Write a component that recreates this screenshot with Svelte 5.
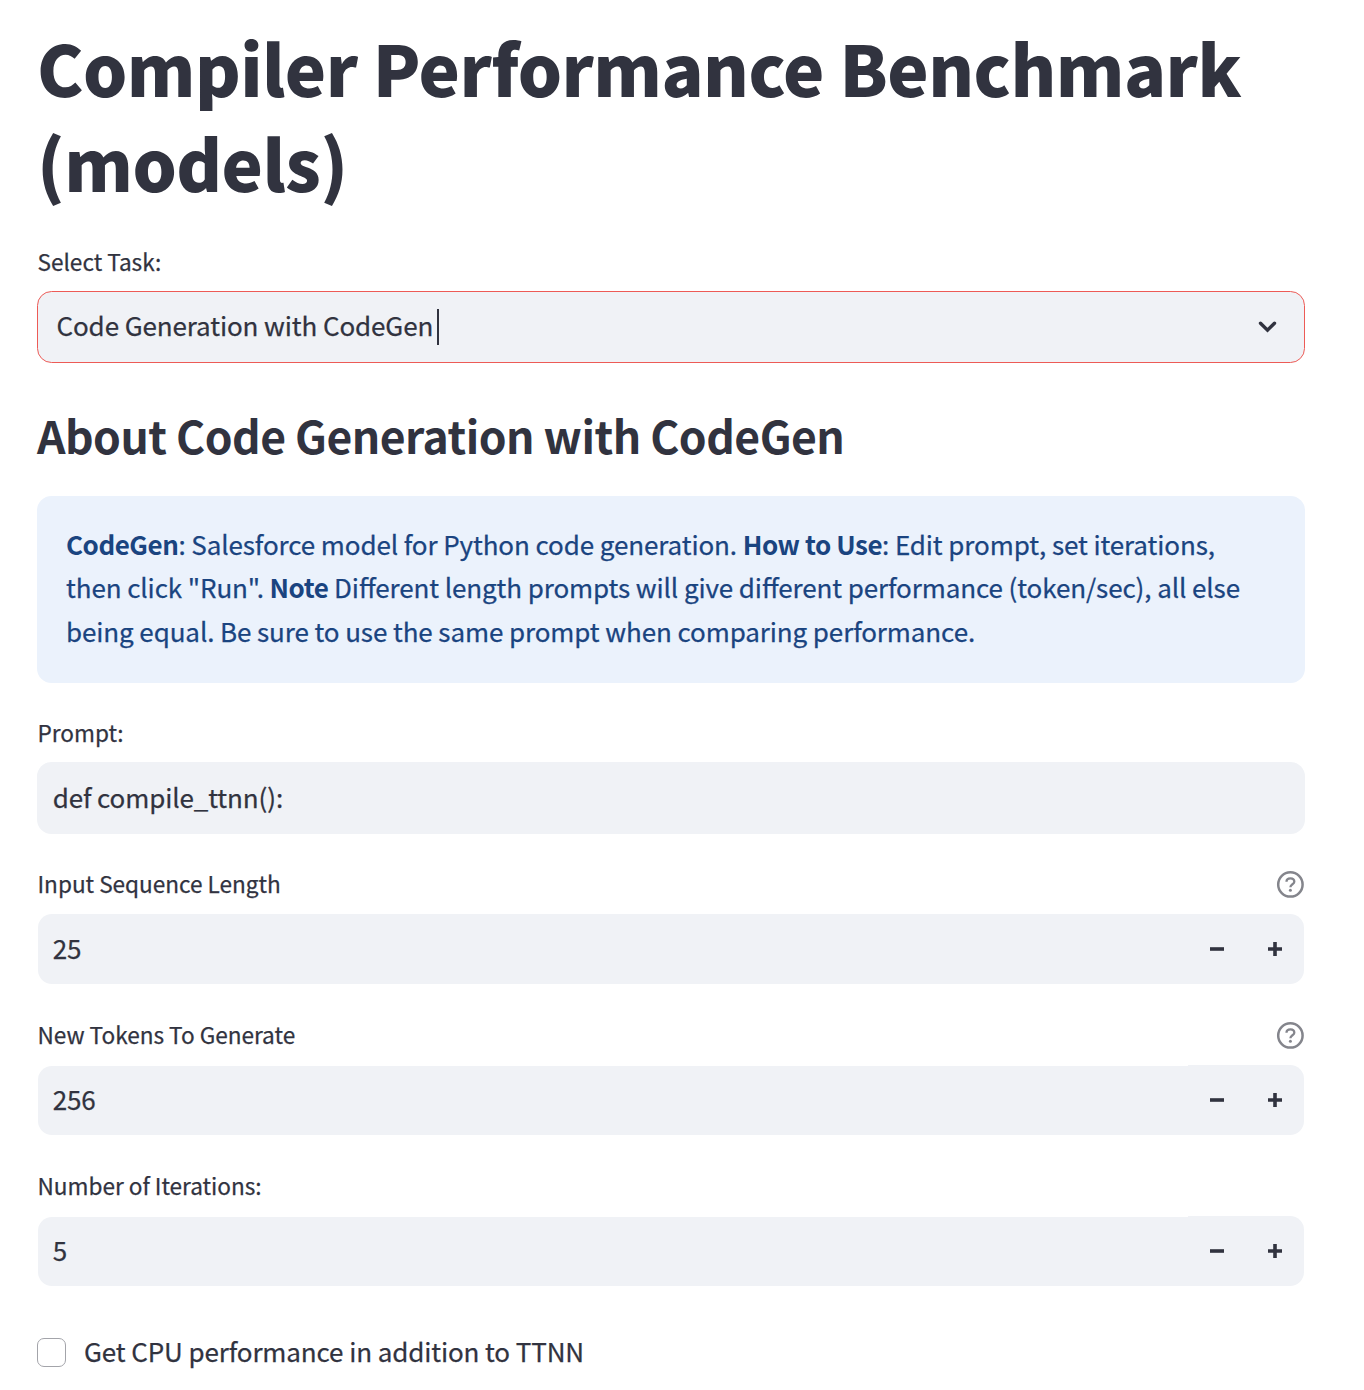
<script>
  const fields = [
    { id: 'seq', label: 'Input Sequence Length', value: '25', help: true },
    { id: 'tokens', label: 'New Tokens To Generate', value: '256', help: true, inset: true },
    { id: 'iters', label: 'Number of Iterations:', value: '5', help: false, inset: true },
  ];
</script>

<main>
  <h1>Compiler Performance Benchmark<br />(models)</h1>

  <div class="label first"><span>Select Task:</span></div>
  <div class="select">
    <span class="text">Code Generation with CodeGen</span><i class="caret"></i>
    <svg class="chevron" width="20" height="14" viewBox="0 0 20 14">
      <path d="M2.5 3.2 L9.5 10.2 L16.5 3.2" fill="none" stroke="#31333f" stroke-width="3.4" stroke-linecap="round" />
    </svg>
  </div>

  <h2>About Code Generation with CodeGen</h2>

  <div class="info">
    <p><b>CodeGen</b>: Salesforce model for Python code generation. <b>How to Use</b>: Edit prompt, set iterations,</p>
    <p>then click "Run". <b>Note</b> Different length prompts will give different performance (token/sec), all else</p>
    <p>being equal. Be sure to use the same prompt when comparing performance.</p>
  </div>

  <div class="label prompt"><span>Prompt:</span></div>
  <div class="input"><span class="text">def compile_ttnn():</span></div>

  {#each fields as f (f.id)}
    <div class="label"><span>{f.label}</span>
      {#if f.help}
        <svg width="28" height="28" viewBox="0 0 28 28" fill="none" stroke="#84858c">
          <circle cx="14.4" cy="14.4" r="12.2" stroke-width="2.5" />
          <path d="M10.5 11.8 C10.5 9.7 12.1 8.3 14.4 8.3 C16.7 8.3 18.3 9.7 18.3 11.7 C18.3 14.2 14.4 14.3 14.4 17.2" stroke-width="2.3" />
          <circle cx="14.4" cy="20.3" r="1.5" fill="#84858c" stroke="none" />
        </svg>
      {/if}
    </div>
    <div class="number">
      <span class="value" class:inset={f.inset}><span class="text">{f.value}</span></span>
      <span class="steps">
        <svg width="14" height="14" viewBox="0 0 14 14"><path d="M0 7H14" stroke="#31333f" stroke-width="3.6" /></svg>
        <svg width="14" height="14" viewBox="0 0 14 14"><path d="M0 7H14M7 0V14" stroke="#31333f" stroke-width="3.6" /></svg>
      </span>
    </div>
  {/each}

  <label class="check"><i class="box"></i><span class="text">Get CPU performance in addition to TTNN</span></label>
</main>

<style>
  :global(body) { background: #fff; }
  main {
    box-sizing: border-box;
    width: 1364px;
    height: 1390px;
    overflow: hidden;
    padding: 20px 59px 0 37px;
    font-family: "Noto Sans CJK JP", "Noto Sans", sans-serif;
    font-size: 26px;
    letter-spacing: -0.11px;
    font-feature-settings: "liga" 1;
    -webkit-text-stroke: 0.25px currentColor;
    color: #31333f;
    white-space: nowrap;
  }
  h1, h2, p { margin: 0; }
  h1 {
    height: 188px;
    font-size: 69.7px;
    line-height: 94.5px;
    font-weight: 900;
    letter-spacing: -0.54px;
  }
  h2 {
    margin: 42px 0 31px;
    font-size: 44.5px;
    line-height: 60px;
    font-weight: 700;
    letter-spacing: -0.53px;
  }
  h1, h2, b { -webkit-text-stroke: 0; }
  b { letter-spacing: -0.46px; }
  .label {
    display: flex;
    align-items: center;
    justify-content: space-between;
    height: 28px;
    font-size: 22.6px;
    line-height: 28px;
    letter-spacing: -0.01px;
    margin: 36px 1px 16px 0.5px;
  }
  .number + .label { margin-top: 37px; }
  .label.first { margin-top: 40px; margin-bottom: 15px; }
  .label.prompt { margin-top: 36px; margin-bottom: 15px; }
  .select, .input {
    box-sizing: border-box;
    display: flex;
    align-items: center;
    height: 72px;
    border-radius: 14.5px;
    background: #f0f2f6;
    padding: 0 16px 0 15.7px;
  }
  .select { border: 1px solid #ed5b56; padding: 0 26px 0 18.5px; }
  .text { line-height: 40px; padding-bottom: 3px; }
  .select .text, .check .text { padding-bottom: 5px; }
  .caret { width: 2px; height: 36px; background: #31333f; margin-left: 4px; }
  .chevron { margin-left: auto; }
  .info {
    box-sizing: border-box;
    height: 187px;
    border-radius: 14.5px;
    background: #ebf2fc;
    padding: 25.8px 29px 0;
    line-height: 43.5px;
    letter-spacing: -0.102px;
    color: #1a4480;
  }
  .number {
    display: flex;
    height: 70px;
    margin: 0 1px;
  }
  .value {
    display: flex;
    align-items: center;
    flex: 1;
    background: #f0f2f6;
    border-radius: 14px 0 0 14px;
    padding-left: 14.7px;
  }
  .value.inset { margin-top: 1px; }
  .steps {
    box-sizing: border-box;
    display: flex;
    align-items: center;
    gap: 44px;
    width: 116px;
    padding-left: 22px;
    background: #f0f2f6;
    border-radius: 0 14px 14px 0;
  }
  .check { display: flex; align-items: center; gap: 18px; margin-top: 45px; }
  .box {
    box-sizing: border-box;
    width: 29px;
    height: 29px;
    margin-bottom: 2px;
    border: 1px solid #a3a4aa;
    border-radius: 7px;
  }
</style>
